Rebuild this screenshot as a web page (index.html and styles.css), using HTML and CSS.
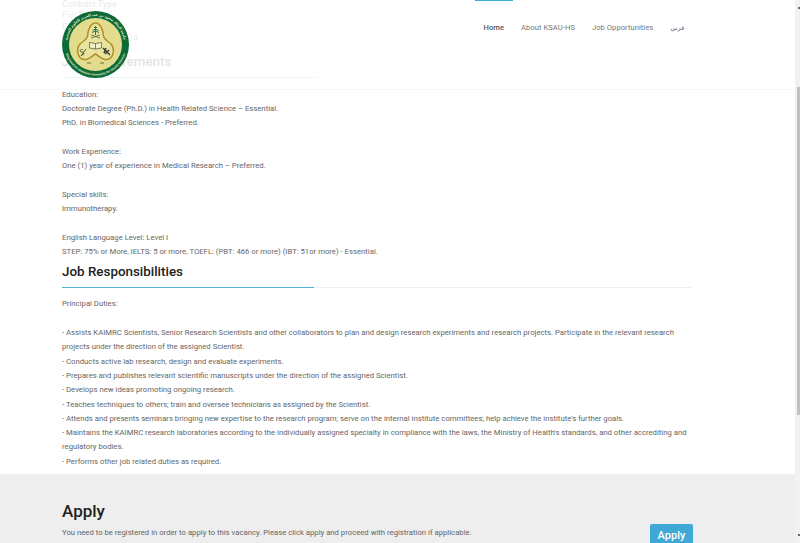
FILE: index.html
```html
<!DOCTYPE html>
<html lang="en">
<head>
    <meta charset="UTF-8">
    <title>Job Details</title>
    <link rel="stylesheet" href="styles.css">
</head>
<body>
    <div class="page">
        <div class="viewport">
            <header class="site-header">
                <svg class="logo" viewBox="0 0 67 67" role="img" aria-label="KSAU-HS">
                    <defs>
                        <path id="ring-top" d="M5 33.500 A28.500 28.500 0 1 1 62 33.500"/>
                        <path id="ring-bottom" d="M2.500 33.500 A31 31 0 0 0 64.500 33.500"/>
                    </defs>
                    <circle cx="33.500" cy="33.500" r="33.500" fill="#0b6a35"/>
                    <circle cx="33.500" cy="33.500" r="26.500" fill="#e3dc8e"/>
                    <text class="logo-ring-text" text-anchor="middle"><textPath href="#ring-top" startOffset="50%">جامعة الملك سعود بن عبد العزيز للعلوم الصحية</textPath></text>
                    <text class="logo-ring-text logo-ring-en" text-anchor="middle"><textPath href="#ring-bottom" startOffset="50%">King Saud bin Abdulaziz University for Health Sciences</textPath></text>
                    <path d="M33.500 12 C38 12 41 18 41.500 25 C42 29 46 30 49 33 C53 38 52 47 45 48.500 C41 49.500 37 45 33.500 43 C30 45 26 49.500 22 48.500 C15 47 14 38 18 33 C21 30 25 29 25.500 25 C26 18 29 12 33.500 12 Z" fill="#e9e3a0" stroke="#b58d27" stroke-width="1.500"/>
                    <path d="M33.500 15.500 V24 M32 17 L33.500 15.500 L35 17 M30.500 19.500 L33.500 18 L36.500 19.500 M30 21.500 L33.500 20 L37 21.500" stroke="#2f7a3f" stroke-width="1" fill="none"/>
                    <path d="M29 27 L38 24 M29 24 L38 27" stroke="#4a6a38" stroke-width=".8" fill="none"/>
                    <path d="M27.500 31.500 L33.500 32.500 L39.500 31.500 V37 L33.500 38 L27.500 37 Z M33.500 32.500 V38" fill="#f3efc8" stroke="#55532f" stroke-width=".7"/>
                    <path d="M19 45 L24 38 M20.500 38.500 C17.500 38 17.500 41 20 41 C22.500 41 22.500 44 20 44" stroke="#4c5a36" stroke-width="1" fill="none"/>
                    <path d="M41 37 L48 44 M44 37 L42 42 M47 39 L43 43" stroke="#3a3a26" stroke-width="1.400" fill="none"/>
                    <path d="M25 52 H29 M38 52 H42" stroke="#6a6a45" stroke-width="1"/>
                </svg>
                <nav class="main-nav">
                    <a class="nav-link active" href="#">Home</a>
                    <a class="nav-link" href="#">About KSAU-HS</a>
                    <a class="nav-link" href="#">Job Opportunities</a>
                    <a class="nav-link nav-ar" href="#" lang="ar">عربي</a>
                </nav>
            </header>

            <main class="job-details">
                <section class="summary">
                    <p class="summary-label">Contract Type</p>
                    <p>Full Time</p>
                    <p class="summary-label">Closing Date</p>
                    <p>December 11, 2024</p>
                </section>

                <h2 class="section-title">Job Requirements</h2>
                <p class="body-text">Education:<br>
                Doctorate Degree (Ph.D.) in Health Related Science – Essential.<br>
                PhD. in Biomedical Sciences - Preferred.<br>
                <br>
                Work Experience:<br>
                One (1) year of experience in Medical Research – Preferred.<br>
                <br>
                Special skills:<br>
                Immunotherapy.<br>
                <br>
                English Language Level: Level I<br>
                STEP: 75% or More, IELTS: 5 or more, TOEFL: (PBT: 466 or more) (IBT: 51or more) - Essential.</p>

                <h2 class="section-title">Job Responsibilities</h2>
                <p class="body-text">Principal Duties:<br>
                <br>
                - Assists KAIMRC Scientists, Senior Research Scientists and other collaborators to plan and design research experiments and research projects. Participate in the relevant research projects under the direction of the assigned Scientist.<br>
                - Conducts active lab research, design and evaluate experiments.<br>
                - Prepares and publishes relevant scientific manuscripts under the direction of the assigned Scientist.<br>
                - Develops new ideas promoting ongoing research.<br>
                - Teaches techniques to others; train and oversee technicians as assigned by the Scientist.<br>
                - Attends and presents seminars bringing new expertise to the research program; serve on the internal institute committees; help achieve the institute's further goals.<br>
                - Maintains the KAIMRC research laboratories according to the individually assigned specialty in compliance with the laws, the Ministry of Health's standards, and other accrediting and regulatory bodies.<br>
                - Performs other job related duties as required.</p>
            </main>

            <section class="apply">
                <div class="apply-text">
                    <h2>Apply</h2>
                    <p>You need to be registered in order to apply to this vacancy. Please click apply and proceed with registration if applicable.</p>
                </div>
                <a class="apply-btn" href="#">Apply</a>
            </section>
        </div>

        <div class="scrollbar">
            <span class="scroll-arrow"></span>
            <span class="scroll-thumb"></span>
            <span class="scroll-arrow"></span>
        </div>
    </div>
</body>
</html>
```

FILE: styles.css
```css
* {
    box-sizing: border-box;
}

html, body {
    margin: 0;
    height: 100%;
    overflow: hidden;
}

body {
    font-family: Roboto, "Liberation Sans", sans-serif;
    font-size: 7.72px;
    line-height: 14.3px;
    color: #666;
    background: #fff;
}

.page {
    display: flex;
    height: 543px;
}

.viewport {
    position: relative;
    flex: 1;
    overflow: hidden;
}

/* header sits over the scrolled page, text shows through it */
.site-header {
    position: absolute;
    top: 0;
    left: 0;
    right: 0;
    height: 90px;
    background: rgba(255,255,255,0.87);
    border-bottom: 1px solid #f7f7f7;
    z-index: 5;
}

.logo {
    position: absolute;
    left: 62px;
    top: 10.5px;
    width: 67px;
    height: 67px;
}

.logo-ring-text {
    font-family: "Noto Sans", "DejaVu Sans", sans-serif;
    font-size: 3.6px;
    font-weight: 700;
    fill: #e6e6c8;
}

.logo-ring-en {
    font-size: 2.9px;
}

.main-nav {
    position: absolute;
    top: 0;
    left: 475px;
    display: flex;
}

.nav-link {
    padding: 20px 8.5px 0;
    height: 40px;
    border-top: 1px solid transparent;
    color: #777;
    text-decoration: none;
    font-size: 7.6px;
    letter-spacing: 0.05px;
}

.nav-link.active {
    color: #555;
    font-weight: 500;
    border-top-color: #3fa9d5;
}

.nav-ar {
    color: #555;
    font-family: "DejaVu Sans", sans-serif;
    font-size: 6.5px;
}

.job-details {
    margin-top: -1px;
    padding: 0 103px 5.3px 62px;
}

.summary p {
    margin: 0;
    font-size: 8.8px;
    line-height: 11.3px;
}

.summary-label {
    font-weight: 500;
}

.section-title {
    margin: 0 0 9.5px;
    padding-bottom: 4.5px;
    color: #222;
    font-size: 13.4px;
    font-weight: 500;
    line-height: 22px;
    border-bottom: 1px solid #f0f0f0;
    position: relative;
}

.section-title::after {
    content: "";
    position: absolute;
    left: 0;
    bottom: -1px;
    width: 252px;
    height: 1px;
    background: #4db2dd;
}

.summary + .section-title {
    margin-top: 6.7px;
}

.body-text + .section-title {
    margin-top: 1.5px;
    padding-bottom: 4px;
}

.body-text {
    margin: 0;
}

.apply {
    display: flex;
    align-items: flex-start;
    height: 70px;
    padding: 26px 102px 0 62px;
    background: #eee;
}

.apply-text {
    flex: 1;
}

.apply h2 {
    margin: 0 0 3px;
    color: #222;
    font-size: 17px;
    font-weight: 500;
    line-height: 23px;
}

.apply p {
    margin: 0;
}

.apply-btn {
    margin-top: 24px;
    width: 43px;
    height: 30px;
    padding-top: 5px;
    background: #3fa9d5;
    border-radius: 2px;
    color: #fff;
    text-align: center;
    text-decoration: none;
    font-size: 11px;
    font-weight: 500;
}

.scrollbar {
    display: flex;
    flex-direction: column;
    align-items: flex-end;
    justify-content: space-between;
    width: 5px;
    padding: 7px 0;
    background: #f1f1f1;
}

.scroll-thumb {
    width: 3px;
    height: 328px;
    margin-top: 2px;
    margin-bottom: 44px;
    background: #c1c1c1;
}

.scroll-arrow {
    width: 2px;
    height: 2px;
    background: #666;
}
```
